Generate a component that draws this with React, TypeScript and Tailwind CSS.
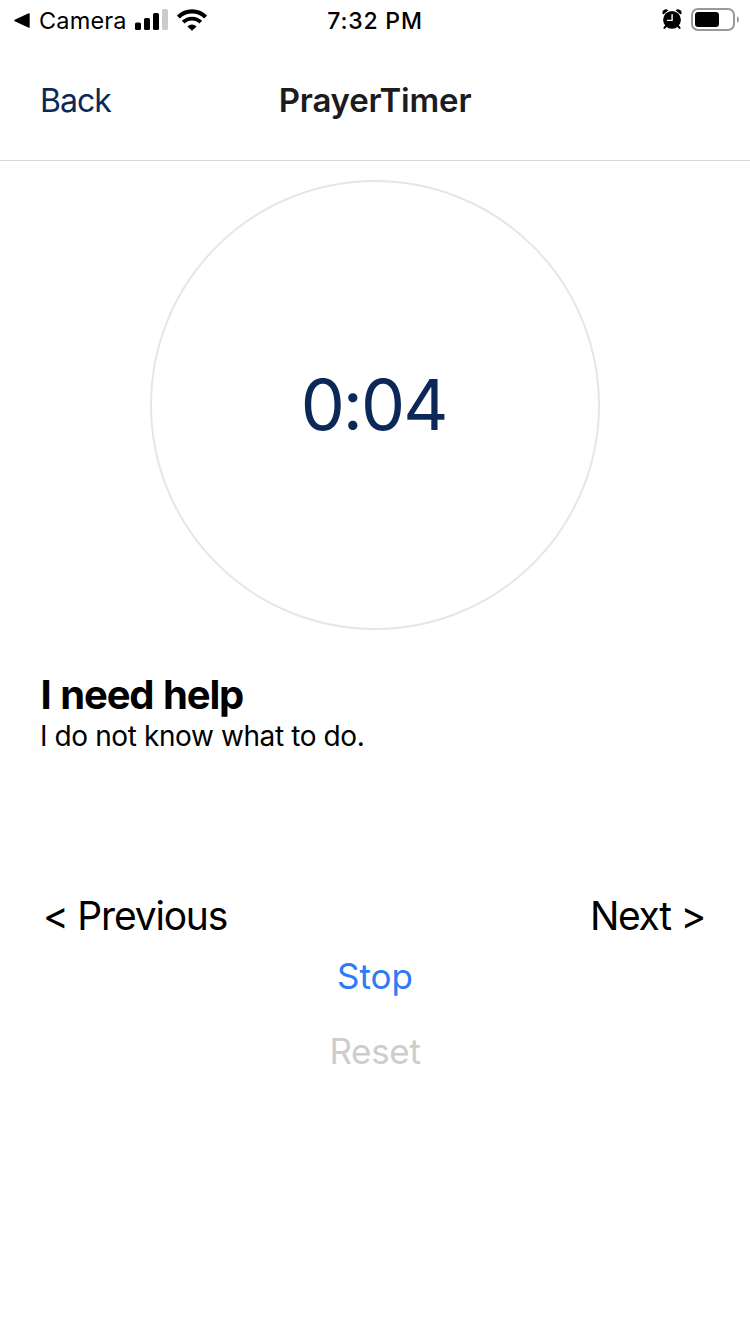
import React from "react";

function SignalIcon() {
  return (
    <svg width="33" height="22" viewBox="0 0 33 22">
      <rect x="0" y="13.5" width="6" height="7.5" rx="1.6" />
      <rect x="9" y="9" width="6" height="12" rx="1.6" />
      <rect x="18" y="4" width="6" height="17" rx="1.6" />
      <rect x="27" y="0" width="6" height="21" rx="1.6" fill="#cbcbcb" />
    </svg>
  );
}

function WifiIcon() {
  return (
    <svg width="30" height="22" viewBox="0 0 30 22" fill="none" stroke="#000" strokeWidth="4.2">
      <path d="M1.4 8.1A19.2 19.2 0 0 1 28.6 8.1" />
      <path d="M6.2 13.2A12.4 12.4 0 0 1 23.8 13.2" strokeWidth="3.8" />
      <path d="M15 21.8L10.4 17.4A6.5 6.5 0 0 1 19.6 17.4Z" fill="#000" stroke="none" />
    </svg>
  );
}

function AlarmIcon() {
  return (
    <svg width="20" height="21" viewBox="0 0 20 21">
      <circle cx="10" cy="10.9" r="8.9" />
      <path d="M1.2 4.6C0.4 2.2 3.4 0.2 5.4 1.3Z" stroke="#000" strokeWidth="1.4" strokeLinejoin="round" />
      <path d="M18.8 4.6C19.6 2.2 16.6 0.2 14.6 1.3Z" stroke="#000" strokeWidth="1.4" strokeLinejoin="round" />
      <path d="M4 17L2.4 18.9M16 17L17.6 18.9" stroke="#000" strokeWidth="2" strokeLinecap="round" />
      <path d="M10.1 5.6V11.4H5.6" fill="none" stroke="#fff" strokeWidth="1.4" strokeLinecap="round" strokeLinejoin="round" />
    </svg>
  );
}

function BatteryIcon() {
  return (
    <svg width="49" height="24" viewBox="0 0 49 24">
      <rect x="1" y="1" width="42" height="21" rx="6" fill="none" stroke="#999" strokeWidth="2" />
      <rect x="4" y="4" width="24" height="15" rx="3.2" />
      <path d="M46 8.2C48.6 9.4 48.6 13.6 46 14.8Z" fill="#999" />
    </svg>
  );
}

function StatusBar() {
  return (
    <div className="grid h-10 grid-cols-3 items-start text-black">
      <div className="flex pl-[14px]">
        <svg className="mt-[13px]" width="16" height="15" viewBox="0 0 16 15">
          <path d="M1 7.5L15 1V14Z" stroke="#000" strokeWidth="1.4" strokeLinejoin="round" />
        </svg>
        <span className="ml-[9px] mt-[6px] w-[96px] whitespace-nowrap text-[23.5px] leading-[30px] tracking-[0.15px]">Camera</span>
        <div className="mt-[9px] w-[42px] shrink-0"><SignalIcon /></div>
        <div className="mt-[9px] shrink-0"><WifiIcon /></div>
      </div>
      <span className="mt-[6px] text-center text-[23px] font-medium leading-[30px] tracking-[0.8px]">7:32 PM</span>
      <div className="flex justify-end gap-[9px]">
        <div className="mt-[9px]"><AlarmIcon /></div>
        <div className="mr-[10px] mt-[8px]"><BatteryIcon /></div>
      </div>
    </div>
  );
}

export default function App() {
  return (
    <div className="flex h-[1334px] w-[750px] flex-col overflow-hidden bg-white font-['Inter',sans-serif] text-black">
      <StatusBar />
      <header className="grid h-[121px] grid-cols-3 items-center border-b border-[#d9d9db] px-10">
        <button className="pt-px text-left text-[32px] leading-10 tracking-[-1px] text-[#0b2859]">Back</button>
        <h1 className="text-center text-[33px] font-semibold leading-10 tracking-[-0.2px] text-[#1c1c1e]">PrayerTimer</h1>
      </header>
      <main className="flex flex-col">
        <div className="mx-auto mt-[19px] flex size-[450px] items-center justify-center rounded-full border-2 border-[#e6e6e6]">
          <span className="pr-[3px] text-[70px] leading-[80px] tracking-[-2px] text-[#0b2859] [font-feature-settings:'calt'_0]">0:04</span>
        </div>
        <section className="mt-[41px] px-10">
          <h2 className="pl-[0.5px] text-[40px] font-bold leading-[48px] tracking-[-1.2px] [word-spacing:1.5px]">I need help</h2>
          <p className="text-[28px] leading-[34px] tracking-[-0.4px]">I do not know what to do.</p>
        </section>
        <div className="mt-[139px] flex justify-between pl-[43px] pr-[43px] text-[39px] leading-[48px] tracking-[-1.2px] [font-feature-settings:'calt'_0]">
          <button>&lt; Previous</button>
          <button className="pr-[2px] tracking-[-1.3px]">Next &gt;</button>
        </div>
        <button className="mt-[14px] self-center text-[35px] leading-[44px] text-[#2f7bf6]">Stop</button>
        <button className="mt-[31px] self-center text-[35px] leading-[44px] tracking-[-0.3px] text-[#cdcdcd]">Reset</button>
      </main>
    </div>
  );
}
